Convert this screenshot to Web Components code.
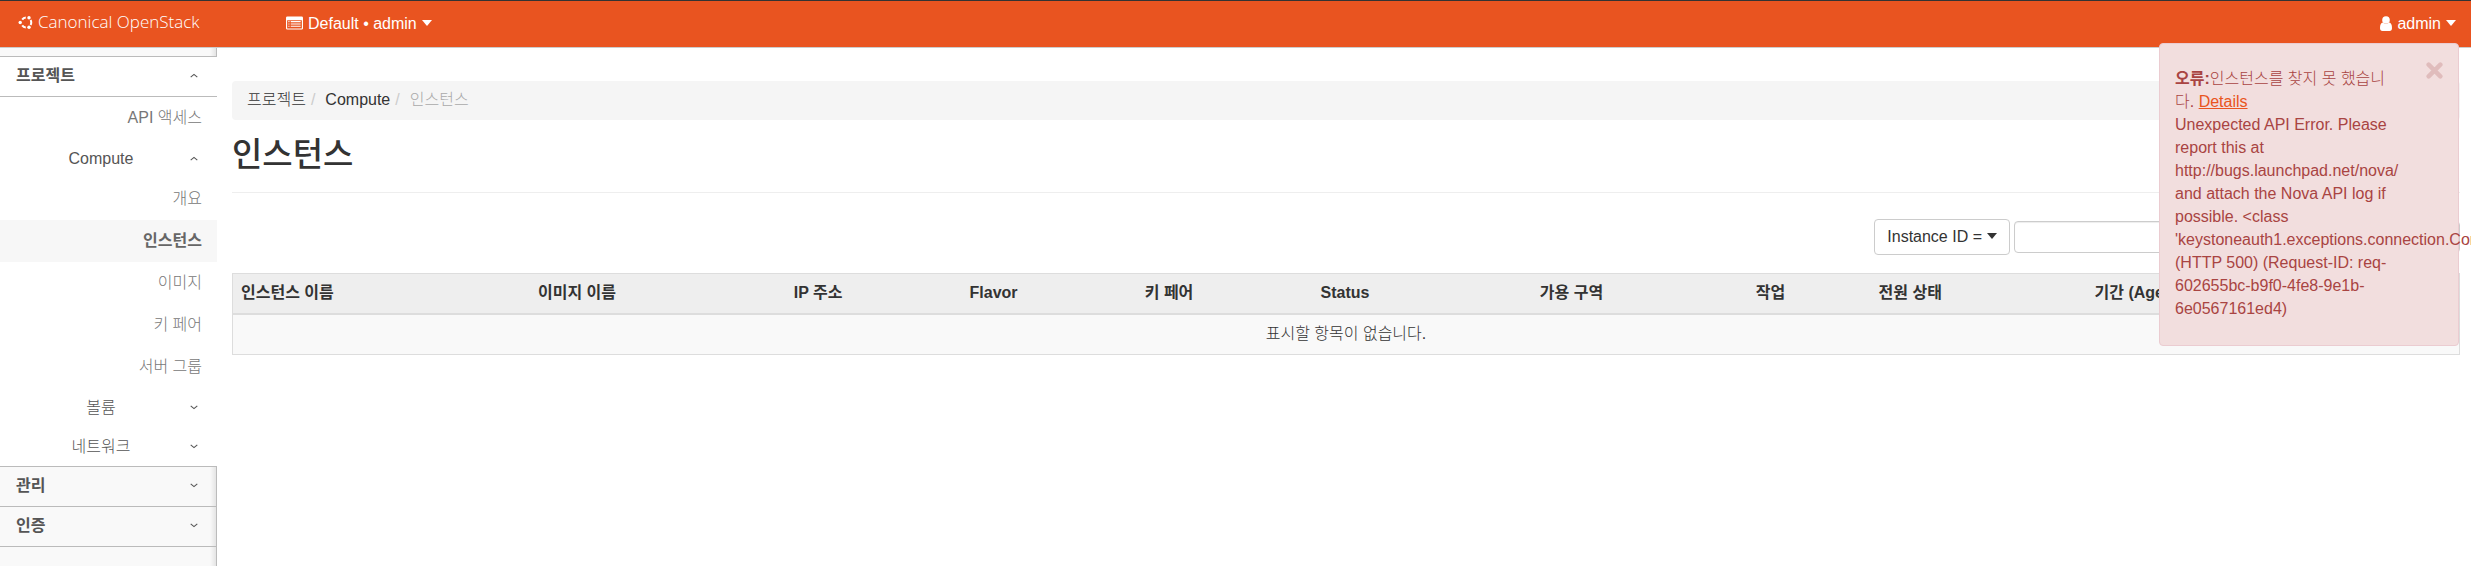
<!DOCTYPE html>
<html lang="ko">
<head>
<meta charset="utf-8">
<title>인스턴스 - Canonical OpenStack</title>
<style>
html,body{margin:0;min-height:100%}
body{font:16px/23px "Liberation Sans","Noto Sans CJK KR",sans-serif;color:#333;background:#fff;overflow-x:hidden}
</style>
</head>
<body>
<os-dashboard></os-dashboard>
<script>
const define = (name, html) => customElements.define(name, class extends HTMLElement {
  constructor() {
    super();
    const t = document.createElement('template');
    t.innerHTML = '<style>*{box-sizing:border-box}a{color:inherit;text-decoration:none}button{font:inherit;color:inherit;border:0;background:none;padding:0}svg{display:block}</style>' + html;
    this.attachShadow({mode: 'open'}).append(t.content.cloneNode(true));
  }
});

define('os-caret', `<style>:host{display:inline-block}</style>
<svg width="10" height="6" viewBox="0 0 10 6"><path d="M0 0h10L5 6z" fill="currentColor"/></svg>`);

define('os-topbar', `<style>
:host{display:flex;align-items:center;height:48px;background:#e95420;border-top:1px solid #333;border-bottom:1px solid #ccc;color:#fff}
.brand{display:flex;align-items:center;gap:5px;width:286px;padding:0 0 4px 18px;font:300 17px/24px "Open Sans",sans-serif}
button{display:flex;align-items:center;gap:5px;padding-bottom:2px}
.user{margin-left:auto;margin-right:15px}
</style>
<a class="brand" href="#"><svg width="15" height="15" viewBox="0 0 15 15" fill="none" stroke="#fff"><path stroke-width="2" d="M4.200 4.600A5 5 0 0 1 7.800 2.500M12.600 5.100A5 5 0 0 1 12.600 9.900M7.800 12.500A5 5 0 0 1 4.200 10.400"/><g fill="#fff" stroke="none"><circle cx="2.200" cy="7.500" r="1.700"/><circle cx="11" cy="2.700" r="1.700"/><circle cx="11" cy="12.300" r="1.700"/></g></svg><span>Canonical OpenStack</span></a>
<button type="button"><svg width="17" height="14" viewBox="0 0 18 14"><path fill="#fff" fill-rule="evenodd" d="M1.500 0h15Q18 0 18 1.500v11Q18 14 16.500 14h-15Q0 14 0 12.500v-11Q0 0 1.500 0zM1.200 4v8.200q0 .6.600.6h14.400q.6 0 .6-.6V4z"/><path stroke="#fff" stroke-width="1.200" d="M2.500 5.500h1.200M5 5.500h10.500M2.500 8h1.200M5 8h10.500M2.500 10.500h1.200M5 10.500h10.500"/></svg><span>Default • admin</span><os-caret></os-caret></button>
<button class="user" type="button"><svg width="12" height="15" viewBox="0 0 12 15" fill="#fff"><circle cx="6" cy="4" r="3.800"/><path d="M2.800 6.500Q0 7.200 0 12q0 3 2.500 3h7Q12 15 12 12q0-4.800-2.800-5.500Q6 9.300 2.800 6.500z"/></svg><span>admin</span><os-caret></os-caret></button>`);

define('os-chevron', `<style>:host{display:block;width:16px;padding-left:4px}:host([open]) svg{transform:rotate(180deg)}</style>
<svg width="8" height="5" viewBox="0 0 8 5" fill="none" stroke="#555" stroke-width="1.100"><path d="M.7.8 4 3.600 7.300.8"/></svg>`);

define('os-section', `<style>
:host{display:block;border-top:1px solid #bbb}
button{display:flex;align-items:center;justify-content:space-between;width:100%;height:39px;padding:0 15px 3px 16px;font-weight:700;color:#555}
.body{background:#fff}
:host([open]){background:#fff}
:host([open]) .body{border-top:1px solid #bbb}
</style>
<button type="button"><slot name="title"></slot><slot name="mark"></slot></button><div class="body"><slot></slot></div>`);

define('os-group', `<style>
:host{display:block}
button{display:grid;grid-template-columns:16px 1fr 16px;align-items:center;width:100%;height:39px;padding:0 15px 1px 0;color:#555;font-weight:300}
.t{grid-column:2;text-align:center}
</style><button type="button"><span class="t"><slot></slot></span><slot name="mark"></slot></button>`);

define('os-item', `<style>
:host{display:block}
a{display:block;height:42px;padding:9px 15px 0 0;text-align:right;color:#777;font-weight:300}
:host([active]) a{background:#f7f7f7;font-weight:700;color:#666}
</style><a href="#"><slot></slot></a>`);

define('os-sidebar', `<style>
:host{display:block;width:217px;flex:none;padding-top:8px;border-right:1px solid #bbb;background:linear-gradient(to left,#e4e4e4,#f9f9f9 6px);box-sizing:border-box}
nav{margin-right:-1px}
.end{border-top:1px solid #bbb}
</style>
<nav aria-label="메뉴">
<os-section open><span slot="title">프로젝트</span><os-chevron slot="mark" open></os-chevron>
<os-item>API 액세스</os-item>
<os-group>Compute<os-chevron slot="mark" open></os-chevron></os-group>
<os-item>개요</os-item><os-item active>인스턴스</os-item><os-item>이미지</os-item><os-item>키 페어</os-item><os-item>서버 그룹</os-item>
<os-group>볼륨<os-chevron slot="mark"></os-chevron></os-group>
<os-group>네트워크<os-chevron slot="mark"></os-chevron></os-group>
</os-section>
<os-section><span slot="title">관리</span><os-chevron slot="mark"></os-chevron></os-section>
<os-section><span slot="title">인증</span><os-chevron slot="mark"></os-chevron></os-section>
<div class="end"></div>
</nav>`);

define('os-breadcrumb', `<style>
:host{display:block}
ol{display:flex;list-style:none;margin:0;padding:7px 15px;height:39px;border-radius:4px;background:#f5f5f5;font-weight:300}
li+li::before{content:"/";color:#ccc;padding:0 10px 0 5px}
.on{color:#aaa}
</style><ol><li><a href="#">프로젝트</a></li><li><a href="#">Compute</a></li><li class="on">인스턴스</li></ol>`);

define('os-filter', `<style>
:host{display:flex;justify-content:flex-end;align-items:center;gap:4px}
button{display:flex;align-items:center;gap:5px;height:36px;padding:0 12px 2px;border:1px solid #ccc;border-radius:4px;background:#fff}
input{width:446px;height:32px;border:1px solid #ccc;border-radius:4px;padding:0 12px;font:inherit;box-shadow:inset 0 1px 1px rgba(0,0,0,.075)}
</style><button type="button">Instance ID =<os-caret></os-caret></button><input type="text" aria-label="필터">`);

define('os-table', `<style>
:host{display:block}
table{width:100%;table-layout:fixed;border-collapse:separate;border-spacing:0;border:1px solid #ddd}
th,td{padding:8px;text-align:left;white-space:nowrap}
th{height:41px;padding:7px 8px 9px;background:#eee;border-bottom:2px solid #ddd}
td{height:39px;padding:7px 8px 9px;text-align:center;background:#f9f9f9;font-weight:300}
</style>
<table><colgroup><col style="width:13.34%"><col style="width:11.49%"><col style="width:7.9%"><col style="width:7.87%"><col style="width:7.9%"><col style="width:9.85%"><col style="width:9.7%"><col style="width:5.52%"><col style="width:9.7%"><col></colgroup>
<thead><tr><th>인스턴스 이름</th><th>이미지 이름</th><th>IP 주소</th><th>Flavor</th><th>키 페어</th><th>Status</th><th>가용 구역</th><th>작업</th><th>전원 상태</th><th>기간 (Age)</th></tr></thead>
<tbody><tr><td colspan="10">표시할 항목이 없습니다.</td></tr></tbody></table>`);

define('os-alert', `<style>
:host{display:block;box-sizing:border-box;width:300px;padding:23px 56px 25px 15px;border:1px solid #ebccd1;border-radius:4px;background:#f2dede;color:#a94442;font-weight:300}
p{margin:0}
a{color:#e95420;text-decoration:underline}
b{font-weight:700}
button{position:absolute;top:18px;right:15px;color:#e0bcbc}
</style>
<button type="button" aria-label="닫기"><svg width="17" height="17" viewBox="0 0 16 16"><path d="M2.500 2.500l11 11M13.500 2.500l-11 11" stroke="currentColor" stroke-width="4.200" stroke-linecap="round"/></svg></button>
<p><b>오류:</b>인스턴스를 찾지 못 했습니다. <a href="#">Details</a><br>Unexpected API Error. Please report this at http://bugs.launchpad.net/nova/ and attach the Nova API log if possible. &lt;class 'keystoneauth1.exceptions.connection.ConnectFailure'&gt; (HTTP 500) (Request-ID: req-602655bc-b9f0-4fe8-9e1b-6e0567161ed4)</p>`);

define('os-dashboard', `<style>
:host{display:flex;flex-direction:column;min-height:100vh;position:relative;overflow:hidden}
.row{display:flex;flex:1}
main{flex:1;min-width:0;padding:33px 11px 0 15px}
h1{margin:15px 0 17px;font-size:33px;line-height:40px;font-weight:500}
hr{border:0;border-top:1px solid #eee;margin:0 0 26px}
os-filter{margin-bottom:18px}
os-alert{position:absolute;top:43px;right:12px}
</style>
<os-topbar></os-topbar>
<div class="row"><os-sidebar></os-sidebar>
<main><os-breadcrumb></os-breadcrumb><h1>인스턴스</h1><hr><os-filter></os-filter><os-table></os-table></main></div>
<os-alert role="alert"></os-alert>`);
</script>
</body>
</html>
